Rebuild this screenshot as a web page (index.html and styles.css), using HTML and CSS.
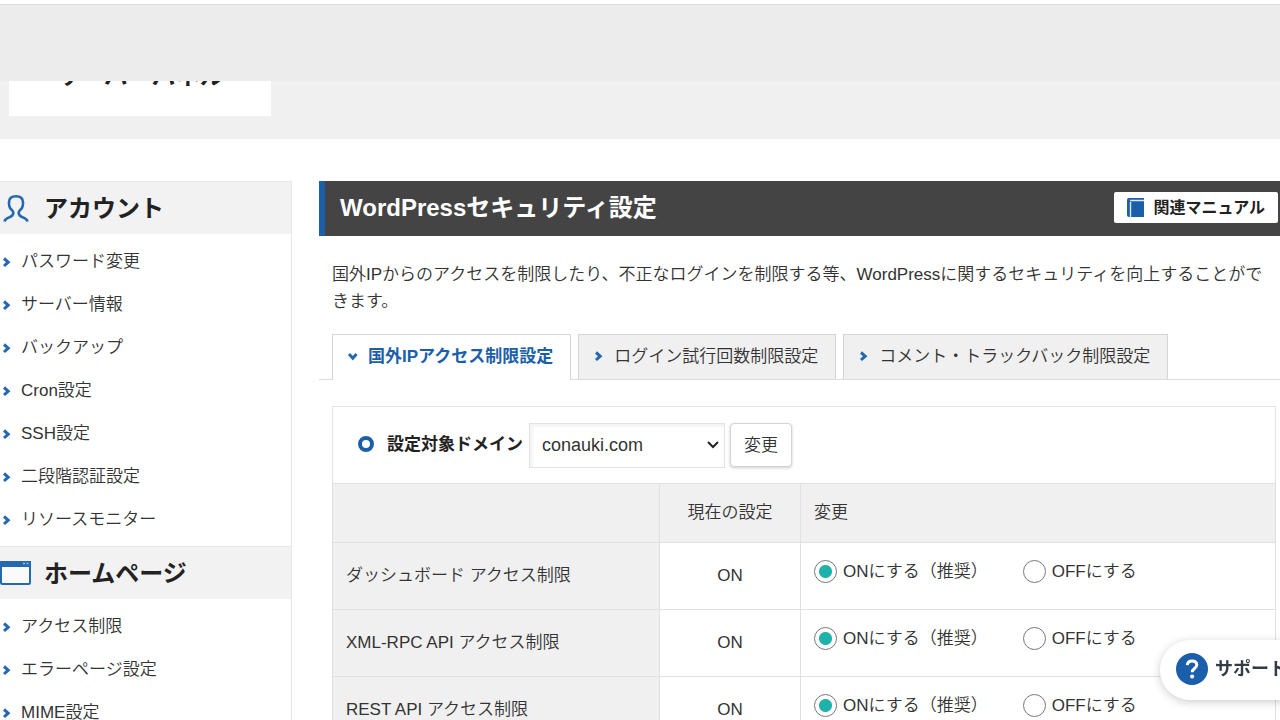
FILE: index.html
```html
<!DOCTYPE html>
<html lang="ja">
<head>
<meta charset="utf-8">
<title>WordPressセキュリティ設定</title>
<link rel="stylesheet" href="styles.css">
</head>
<body>
<svg class="sprite" aria-hidden="true">
  <symbol id="chevron" viewBox="0 0 10 12"><path d="M2 2.500 6.200 6.200 2 10" fill="none" stroke="currentColor" stroke-width="3"/></symbol>
</svg>
<div class="topbar"></div>
<header class="header"><div class="logo">サーバーパネル</div></header>
<div class="layout">
  <nav class="sidebar">
    <h2 class="side-title">
      <svg class="side-icon" viewBox="0 0 32 32" aria-hidden="true"><path d="M4.500 29.500C5 26.500 7.500 26 10 25 12.500 24 13.300 22.500 13.300 20.500 13.300 18.500 10.500 17.500 9.800 15.500 9.400 14 8.700 13 9 10.500 9 6 11.500 4.300 16 4.300S23 6 23 10.500C23.300 13 22.600 14 22.200 15.500 21.500 17.500 18.700 18.500 18.700 20.500 18.700 22.500 19.500 24 22 25 24.500 26 27 26.500 27.500 29.500" fill="none" stroke="currentColor" stroke-width="2.600"/></svg>
      アカウント
    </h2>
    <ul class="side-list">
      <li><a href="#"><svg class="chev"><use href="#chevron"/></svg>パスワード変更</a></li>
      <li><a href="#"><svg class="chev"><use href="#chevron"/></svg>サーバー情報</a></li>
      <li><a href="#"><svg class="chev"><use href="#chevron"/></svg>バックアップ</a></li>
      <li><a href="#"><svg class="chev"><use href="#chevron"/></svg>Cron設定</a></li>
      <li><a href="#"><svg class="chev"><use href="#chevron"/></svg>SSH設定</a></li>
      <li><a href="#"><svg class="chev"><use href="#chevron"/></svg>二段階認証設定</a></li>
      <li><a href="#"><svg class="chev"><use href="#chevron"/></svg>リソースモニター</a></li>
    </ul>
    <h2 class="side-title">
      <svg class="side-icon" viewBox="0 0 32 32" aria-hidden="true"><rect x="1" y="5" width="29" height="22" rx="1.500" fill="#fafafa" stroke="currentColor" stroke-width="2"/><path d="M0 4h31v6H0z" fill="currentColor"/><path d="M23 6.500h2M26.500 6.500h2" stroke="#9dc0e4" stroke-width="1.500"/></svg>
      ホームページ
    </h2>
    <ul class="side-list">
      <li><a href="#"><svg class="chev"><use href="#chevron"/></svg>アクセス制限</a></li>
      <li><a href="#"><svg class="chev"><use href="#chevron"/></svg>エラーページ設定</a></li>
      <li><a href="#"><svg class="chev"><use href="#chevron"/></svg>MIME設定</a></li>
    </ul>
  </nav>
  <main class="main">
    <div class="page-title">
      <h1>WordPressセキュリティ設定</h1>
      <a class="manual" href="#">
        <svg class="book" viewBox="0 0 17 19" aria-hidden="true"><path d="M2 0h15v19H2q-2 0-2-2V2Q0 0 2 0z" fill="#1b5faa"/><path d="M3.500 4v15M3 2.500H17" fill="none" stroke="#dbe7f4" stroke-width="1.400"/></svg>
        関連マニュアル
      </a>
    </div>
    <p class="lead">国外IPからのアクセスを制限したり、不正なログインを制限する等、WordPressに関するセキュリティを向上することができます。</p>
    <div class="tabs">
      <a class="tab active" href="#"><svg class="chev down"><use href="#chevron"/></svg>国外IPアクセス制限設定</a>
      <a class="tab" href="#"><svg class="chev"><use href="#chevron"/></svg>ログイン試行回数制限設定</a>
      <a class="tab" href="#"><svg class="chev"><use href="#chevron"/></svg>コメント・トラックバック制限設定</a>
    </div>
    <form class="panel">
      <div class="domain">
        <span class="ring"></span>
        <label for="domain">設定対象ドメイン</label>
        <span class="select-wrap">
          <select id="domain"><option>conauki.com</option></select>
          <svg class="arrow" viewBox="0 0 14 10" aria-hidden="true"><path d="M2 2 7 7 12 2" fill="none" stroke="#222" stroke-width="2"/></svg>
        </span>
        <button type="button">変更</button>
      </div>
      <table class="settings">
        <thead><tr><th class="name"></th><th class="state">現在の設定</th><th>変更</th></tr></thead>
        <tbody>
          <tr><th class="name">ダッシュボード アクセス制限</th><td class="state">ON</td><td><div class="choices"><label><input type="radio" name="dash" checked>ONにする（推奨）</label><label><input type="radio" name="dash">OFFにする</label></div></td></tr>
          <tr><th class="name">XML-RPC API アクセス制限</th><td class="state">ON</td><td><div class="choices"><label><input type="radio" name="xml" checked>ONにする（推奨）</label><label><input type="radio" name="xml">OFFにする</label></div></td></tr>
          <tr><th class="name">REST API アクセス制限</th><td class="state">ON</td><td><div class="choices"><label><input type="radio" name="rest" checked>ONにする（推奨）</label><label><input type="radio" name="rest">OFFにする</label></div></td></tr>
        </tbody>
      </table>
    </form>
  </main>
</div>
<a class="support" href="#">
  <svg class="help" viewBox="0 0 32 32" aria-hidden="true"><circle cx="16" cy="16" r="16" fill="#1b5faa"/><path d="M11.300 12.200C11.500 9.300 13.500 8 16 8c2.800 0 4.800 1.500 4.800 4 0 3.600-4.600 3.500-4.600 7.200" fill="none" stroke="#fff" stroke-width="3"/><circle cx="16.100" cy="23.500" r="2" fill="#fff"/></svg>
  サポート
</a>
</body>
</html>
```
FILE: styles.css
```css
* { box-sizing: border-box; }
body {
  margin: 0;
  background: #fff;
  color: #333;
  font: 350 17px/27px "Liberation Sans", "Noto Sans CJK JP", sans-serif;
}
a { color: inherit; text-decoration: none; }
.sprite { display: none; }
.topbar {
  height: 77px;
  margin-top: 4px;
  border-top: 1px solid #dedede;
  background: #ececec;
}
.header { height: 58px; padding-left: 9px; background: #f0f0f0; }
.logo {
  display: flex;
  align-items: flex-end;
  justify-content: center;
  width: 262px;
  height: 35px;
  padding: 0 0 27px;
  overflow: hidden;
  background: #fff;
  color: #222;
  font-size: 24px;
  font-weight: 700;
}
.layout { display: flex; align-items: flex-start; gap: 27px; margin-top: 42px; }
.sidebar { flex: none; width: 292px; border-right: 1px solid #e6e6e6; }
.side-title {
  display: flex;
  align-items: center;
  gap: 12px;
  height: 53px;
  margin: 0;
  border-top: 1px solid #e6e6e6;
  background: #f2f2f2;
  color: #222;
  font-size: 24px;
  font-weight: 700;
}
.side-icon { width: 32px; height: 32px; color: #2468b0; }
.side-list { margin: 0; padding: 6px 0 5px; list-style: none; }
.side-list a { display: flex; align-items: center; gap: 9px; height: 43px; padding-left: 2px; }
.chev { flex: none; width: 10px; height: 12px; color: #2468b0; }
.down { transform: rotate(90deg); }
.main { flex: 1; min-width: 0; }
.page-title {
  display: flex;
  align-items: center;
  justify-content: space-between;
  height: 55px;
  padding: 0 2px 2px 15px;
  border-left: 6px solid #1b5faa;
  background: #444;
  color: #fff;
}
.page-title h1 { margin: 0; font-size: 24px; font-weight: 700; }
.manual {
  display: flex;
  align-items: center;
  gap: 9px;
  height: 31px;
  padding: 0 13px;
  border-radius: 2px;
  background: #fff;
  color: #222;
  font-size: 16px;
  font-weight: 700;
}
.book { width: 17px; height: 19px; }
.lead { margin: 25px 4px 19px 13px; }
.tabs { display: flex; gap: 7px; padding-left: 13px; border-bottom: 1px solid #ddd; }
.tab {
  display: flex;
  align-items: center;
  gap: 10px;
  height: 45px;
  padding: 0 17px 2px 15px;
  border: 1px solid #d5d5d5;
  border-bottom: 0;
  background: #f0f0f0;
}
.active { margin-bottom: -1px; height: 46px; background: #fff; color: #1b5faa; font-weight: 700; }
.panel { margin: 26px 4px 0 13px; border-top: 1px solid #e4e4e4; }
.domain {
  display: flex;
  align-items: center;
  height: 76px;
  padding-left: 25px;
  border: 1px solid #e4e4e4;
  border-width: 0 1px;
}
.ring { width: 16px; height: 16px; margin: 0 13px 2px 0; border: 4px solid #1b5faa; border-radius: 50%; }
.domain label { margin-right: 6px; padding-bottom: 2px; color: #222; font-weight: 700; }
.select-wrap { position: relative; margin-right: 5px; }
.domain select {
  display: block;
  width: 196px;
  height: 45px;
  padding: 0 12px;
  appearance: none;
  border: 1px solid #e2e2e2;
  border-radius: 0;
  background: #fff;
  box-shadow: inset 3px 3px 2px #f5f5f5;
  color: #333;
  font: inherit;
  font-size: 18px;
}
.arrow { position: absolute; right: 5px; top: 17px; width: 14px; height: 10px; pointer-events: none; }
.domain button {
  height: 44px;
  padding: 0 13px;
  border: 1px solid #d4d4d4;
  border-radius: 4px;
  background: #fff;
  box-shadow: 0 1px 3px #0003;
  color: #333;
  font: inherit;
}
.settings { width: 100%; border-collapse: collapse; table-layout: fixed; }
.settings th, .settings td {
  height: 67px;
  padding: 0 13px 1px;
  border: 1px solid #e0e0e0;
  font-weight: inherit;
  text-align: left;
}
.settings thead th { height: 59px; }
.settings th { background: #f0f0f0; }
.settings .name { width: 327px; }
.settings .state { width: 141px; text-align: center; }
.choices { display: flex; align-items: center; gap: 35px; padding-bottom: 8px; }
.choices label { display: flex; align-items: center; gap: 6px; }
.choices input {
  width: 23px;
  height: 23px;
  margin: 0;
  appearance: none;
  border: 1px solid #777;
  border-radius: 50%;
  background: #fff;
}
.choices input:checked { background: radial-gradient(circle, #20b2aa 6px, #fff 7px); }
.support {
  position: fixed;
  right: -32px;
  bottom: 20px;
  display: flex;
  align-items: center;
  gap: 7px;
  width: 152px;
  height: 60px;
  padding: 0 0 2px 16px;
  border-radius: 30px;
  background: #fff;
  box-shadow: 0 2px 10px #0003;
  color: #333b45;
  font-size: 18px;
  font-weight: 700;
  white-space: nowrap;
}
.help { flex: none; width: 32px; height: 32px; }
```
